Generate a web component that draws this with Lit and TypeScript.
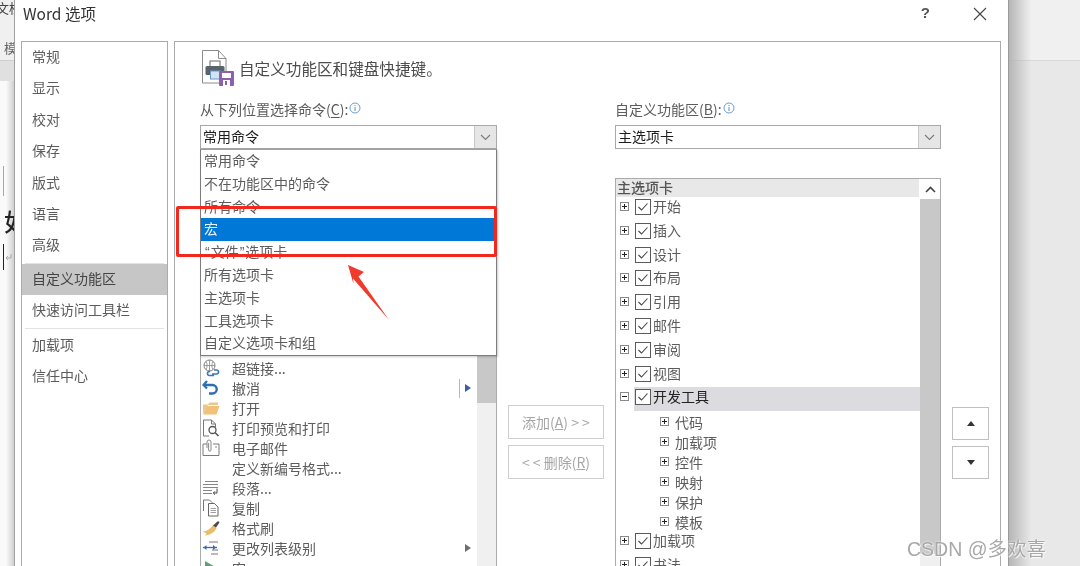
import { LitElement, html, css, svg, nothing } from 'lit';
import { customElement } from 'lit/decorators.js';

const icons: Record<string, unknown> = {
  link: svg`<circle cx="7.5" cy="6.5" r="5.5" fill="none" stroke="#7a7a7a"/><path d="M2 6.5h11M7.5 1v11M4 2.5c1.5 2.500 1.500 5.500 0 8M11 2.500c-1.500 2.500-1.500 5.500 0 8" fill="none" stroke="#8a8a8a" stroke-width=".8"/><path d="M8 12.500h-.5a2 2 0 0 0 0 4H12M12 11h2.500a2 2 0 0 1 0 4H10" fill="none" stroke="#3d78b5" stroke-width="1.600"/>`,
  undo: svg`<path d="M5 2 1.500 6 5 9.500" fill="none" stroke="#2f6fb0" stroke-width="2.200"/><path d="M2 6h8.500a4.200 4.200 0 0 1 0 8.500H7" fill="none" stroke="#2f6fb0" stroke-width="2.400"/>`,
  folder: svg`<path d="M1 15V5.500h5l1.500-2H16V6H6L1 15Z" fill="#e8c88e"/><path d="M1 15.500 5 7h12.500l-3 8.500Z" fill="#f2c078"/>`,
  preview: svg`<path d="M1.500 17V1h8l4 4v3M9.500 1v4h4M1.500 17H7" fill="none" stroke="#777" stroke-width="1"/><circle cx="10.500" cy="11" r="3.500" fill="#fff" stroke="#555" stroke-width="1.300"/><path d="m13 13.500 3.500 3.500" stroke="#555" stroke-width="1.600"/>`,
  mail: svg`<path d="M5 5H1v11.500h16V5h-6" fill="none" stroke="#7a7a7a"/><path d="M5 9V3a2 2 0 0 1 4 0v8a1.200 1.200 0 0 1-2.400 0V4" fill="none" stroke="#8a8a8a"/><path d="M13 8h2" stroke="#888"/>`,
  para: svg`<path d="M3 2.500h13M1 5.500h15M1 8.500h15M1 11.500h9M1 14.500h9" stroke="#777" stroke-width=".9"/><path d="M15 9.500v4.500h-3.500m1.500-1.700-1.700 1.700 1.700 1.700" fill="none" stroke="#333" stroke-width=".9"/>`,
  copy: svg`<path d="M1.500 12V1h6l2.500 2.500v1" fill="#fff" stroke="#777"/><path d="M6.500 4.500h6l3.500 3.500v9H6.500Z" fill="#fff" stroke="#666"/><path d="M8.500 9.500h5.500M8.500 11.500h5.500M8.500 13.500h5.500" stroke="#888" stroke-width=".8"/>`,
  brush: svg`<path d="m11 6 3.500 3c-1.500 4-6 7-12 7.500C6 14.500 4 14 .500 12.500 5 12.500 8.500 9.500 11 6Z" fill="#e8bd6c"/><path d="m11 6.500 5-4.500 1.500 1.500-3.500 5Z" fill="#4a4a4a"/>`,
  level: svg`<path d="M7 3h9M9 15h7M10 11h6" stroke="#777" stroke-width="1"/><path d="M1 8.500h14" stroke="#2f6fb0" stroke-width="1.300"/><path d="m4.500 6-3 2.500 3 2.500ZM11 6l3 2.500-3 2.500Z" fill="#2f6fb0"/>`,
  macro: svg`<path d="M3 2v14l12-7Z" fill="#5f9e78"/>`,
};

const navTop = ['常规', '显示', '校对', '保存', '版式', '语言', '高级'];
const menuItems = ['常用命令', '不在功能区中的命令', '所有命令', '宏', '“文件”选项卡', '所有选项卡', '主选项卡', '工具选项卡', '自定义选项卡和组'];
const commands = [
  { icon: 'link', label: '超链接...' },
  { icon: 'undo', label: '撤消', split: true },
  { icon: 'folder', label: '打开' },
  { icon: 'preview', label: '打印预览和打印' },
  { icon: 'mail', label: '电子邮件' },
  { icon: '', label: '定义新编号格式...' },
  { icon: 'para', label: '段落...' },
  { icon: 'copy', label: '复制' },
  { icon: 'brush', label: '格式刷' },
  { icon: 'level', label: '更改列表级别', more: true },
  { icon: 'macro', label: '宏' },
];
const tabsBefore = ['开始', '插入', '设计', '布局', '引用', '邮件', '审阅', '视图'];
const devChildren = ['代码', '加载项', '控件', '映射', '保护', '模板'];

@customElement('app-root')
export class AppRoot extends LitElement {
  static styles = css`
    :host {
      display: block;
      width: 1080px;
      height: 566px;
      overflow: hidden;
      font-family: "Noto Sans CJK SC", "Liberation Sans", sans-serif;
      font-size: 14px;
      color: #5c5c5c;
    }
    .page {
      position: relative;
      display: flex;
      height: 566px;
      overflow: hidden;
      filter: blur(0.4px);
    }
    .strip-left {
      width: 14px;
      flex: none;
      display: flex;
      flex-direction: column;
      overflow: hidden;
      white-space: nowrap;
      background: linear-gradient(90deg, transparent 6px, #d0d0d0), #fafafa;
    }
    .ribbon {
      height: 60px;
      flex: none;
      background: #f0f0f0;
      font-size: 13px;
      line-height: 18px;
      color: #666;
    }
    .ribbon .doc { margin: -1px 0 0 -4px; color: #444; }
    .ribbon .tab { margin: 22px 0 0 4px; }
    .toolbar { height: 20px; flex: none; background: #e0e0e0; border-top: 1px solid #cecece; }
    .doc-area { flex: 1; }
    .box-edge { height: 30px; width: 3px; margin-top: 85px; border-right: 1px solid #a8a8a8; }
    .big { margin: 8px 0 0 4px; font-size: 24px; line-height: 34px; color: #222; font-weight: 500; }
    .caret { display: flex; align-items: center; height: 26px; margin-top: 6px; margin-left: 3px; }
    .caret i { width: 1px; height: 26px; background: #222; }
    .caret svg { margin-left: 1px; }
    .strip-right {
      flex: 1;
      background: linear-gradient(90deg, #b6b6b6, rgba(200, 200, 200, 0) 22px),
        linear-gradient(#f0f0f0 60px, #d8d8d8 60px, #d8d8d8 61px, #e8e8e8 61px);
    }
    .dialog {
      width: 995px;
      flex: none;
      box-sizing: border-box;
      display: flex;
      flex-direction: column;
      background: #fff;
      border-left: 1px solid #a0a0a0;
      border-right: 1px solid #9a9a9a;
    }
    .titlebar {
      height: 41px;
      flex: none;
      box-sizing: border-box;
      display: flex;
      align-items: flex-start;
      padding: 2px 21px 0 8px;
      font-size: 15px;
      line-height: 22px;
      color: #333;
    }
    .titlebar .name { flex: 1; font-size: 15.500px; }
    .titlebar .help { font-family: "Liberation Sans", sans-serif; font-size: 15px; font-weight: bold; color: #555; margin-right: 43px; }
    .titlebar svg { margin-top: 5px; }
    .body { flex: 1; min-height: 0; display: flex; gap: 6px; padding: 0 7px 0 6px; }
    .nav {
      width: 147px;
      flex: none;
      box-sizing: border-box;
      border: 1px solid #ababab;
      border-bottom: 0;
    }
    .nav-item { height: 31.400px; line-height: 29.400px; padding-left: 10px; }
    .nav-item.on { background: #c6c6c6; color: #444; }
    .nav-sep { height: 1px; margin: 1px 3px 0; background: #e4e4e4; }
    .nav-sep.low { margin-bottom: 1px; }
    .main {
      flex: 1;
      min-width: 0;
      box-sizing: border-box;
      display: flex;
      flex-direction: column;
      border: 1px solid #ababab;
      border-bottom: 0;
    }
    .head {
      height: 58px;
      flex: none;
      box-sizing: border-box;
      padding: 8px 0 0 27px;
      display: flex;
      align-items: flex-start;
      gap: 5px;
    }
    .head svg { display: block; }
    .head span { font-size: 15.600px; line-height: 22px; color: #4c4c4c; margin-top: 7px; }
    .columns { flex: 1; min-height: 0; display: flex; padding-left: 25px; }
    .col { display: flex; flex-direction: column; min-height: 0; }
    .col.cmds { width: 297px; }
    .col.tabs { width: 326px; }
    .col.mid { width: 118px; box-sizing: border-box; padding: 305px 0 0 11px; gap: 6px; }
    .col.order { padding: 307px 0 0 11px; gap: 6px; }
    .label { height: 20px; line-height: 18px; display: flex; align-items: flex-start; gap: 1px; flex: none; }
    .label u { text-underline-offset: 2px; }
    .label svg { margin-top: 2px; }
    .combo {
      height: 24px;
      margin-top: 5px;
      flex: none;
      box-sizing: border-box;
      display: flex;
      border: 1px solid #a8a8a8;
      color: #1c1c1c;
      line-height: 20px;
    }
    .combo .val { flex: 1; padding-left: 2px; }
    .combo .btn {
      width: 21px;
      background: #e6e6e6;
      border-left: 1px solid #c8c8c8;
      display: flex;
      align-items: center;
      justify-content: center;
    }
    .menu {
      flex: none;
      border: 1px solid #7c7c7c;
      border-top-color: #a0a0a0;
      box-shadow: 1px 1px 2px rgba(0, 0, 0, 0.2);
      background: #fff;
      position: relative;
      z-index: 1;
      width: 295px;
    }
    .menu div { height: 22.800px; line-height: 21.800px; padding-left: 3px; }
    .menu div.on { background: #0078d7; color: #e8f2fb; }
    .menu .q { font-family: "Liberation Sans", sans-serif; margin: 0 1px; }
    .list {
      flex: 1;
      min-height: 0;
      display: flex;
      overflow: hidden;
      border-left: 1px solid #ababab;
      border-right: 1px solid #ababab;
    }
    .rows { flex: 1; min-width: 0; padding-top: 2px; overflow: hidden; }
    .cmd { height: 20px; display: flex; align-items: center; padding-left: 1px; position: relative; }
    .cmd .ico { width: 18px; height: 18px; flex: none; margin-right: 12px; }
    .cmd .name { flex: 1; white-space: nowrap; }
    .cmd .split { width: 1px; height: 19px; background: #b8b8b8; margin-right: 5px; }
    .tri { width: 0; height: 0; border-style: solid; border-width: 4px 0 4px 6px; border-color: transparent transparent transparent #6f6f6f; margin-right: 6px; }
    .tri.blue { border-left-color: #3f5f9f; }
    .vbar { width: 19px; flex: none; display: flex; flex-direction: column; background: #f0f0f0; }
    .vbar .thumb { background: #c8c8c8; }
    .list .thumb { height: 47px; }
    .tree {
      flex: 1;
      min-height: 0;
      margin-top: 29px;
      display: flex;
      overflow: hidden;
      border: 1px solid #ababab;
      border-bottom: 0;
    }
    .tree-body { flex: 1; min-width: 0; overflow: hidden; }
    .tree-head {
      height: 18px;
      line-height: 16px;
      padding-left: 1px;
      margin-right: 1px;
      background: #e8e8e8;
      color: #555;
      font-weight: 500;
    }
    .node { height: 23.800px; display: flex; padding-left: 4px; }
    .node .body-cell { flex: 1; height: 23.800px; display: flex; margin-left: 5px; padding-left: 1px; line-height: 19px; }
    .node.on .body-cell { background: #dcdce0; color: #222; }
    .exp {
      width: 9px;
      height: 9px;
      flex: none;
      margin-top: 5px;
      display: block;
    }
    .check { width: 16px; height: 16px; flex: none; margin: 2px 2px 0 0; display: block; }
    .kids { margin: 1.800px 0 -2px; }
    .kid { height: 20px; line-height: 18px; display: flex; padding-left: 44px; gap: 6px; }
    .kid .exp { margin-top: 4px; }
    .bar-btn { height: 20px; flex: none; background: #fff; display: flex; align-items: center; justify-content: center; }
    .tree .thumb { height: 355px; flex: none; }
    .tree .vbar { width: 20px; }
    .action {
      width: 96px;
      height: 34px;
      box-sizing: border-box;
      border: 1px solid #cfcfcf;
      color: #a6a6a6;
      display: flex;
      align-items: center;
      justify-content: center;
      gap: 0;
      white-space: pre;
    }
    .move {
      width: 37px;
      height: 33px;
      box-sizing: border-box;
      border: 1px solid #c0c0c0;
      display: flex;
      align-items: center;
      justify-content: center;
    }
    .up { border-style: solid; border-width: 0 4.500px 5px; border-color: transparent transparent #333; }
    .down { border-style: solid; border-width: 5px 4.500px 0; border-color: #333 transparent transparent; }
    .highlight {
      position: absolute;
      left: 176px;
      top: 206px;
      width: 321px;
      height: 51px;
      box-sizing: border-box;
      border: 3px solid #f2281c;
      border-radius: 2px;
      z-index: 2;
    }
    .arrow { position: absolute; left: 340px; top: 260px; z-index: 2; }
    .mark {
      position: absolute;
      left: 907px;
      top: 535px;
      z-index: 3;
      font-family: "Liberation Sans", "Noto Sans CJK SC", sans-serif;
      font-size: 19.500px;
      line-height: 28px;
      white-space: nowrap;
      color: #a8a8a8;
      text-shadow: 0 0 2px #fff, 1px 1px 1px rgba(255, 255, 255, 0.8);
    }
  `;

  private chevron(up = false) {
    return html`<svg width="11" height="7" viewBox="0 0 11 7"><path d=${up ? 'M1 6 5.500 1.500 10 6' : 'M1 1l4.500 4.500L10 1'} fill="none" stroke=${up ? '#444' : '#7a7a7a'} stroke-width=${up ? 1.6 : 1.1}/></svg>`;
  }

  private info() {
    return html`<svg width="12" height="12" viewBox="0 0 12 12"><circle cx="6" cy="6" r="5" fill="none" stroke="#6d9bd1"/><path d="M6 5v4M6 3v1" stroke="#5b8cc6"/></svg>`;
  }

  private expander(open = false) {
    return html`<svg class="exp" viewBox="0 0 9 9"><rect x=".5" y=".5" width="8" height="8" fill="#fff" stroke="#8a8a8a"/><path d=${open ? 'M2 4.500h5' : 'M2 4.500h5M4.500 2v5'} stroke="#222"/></svg>`;
  }

  private checkbox() {
    return html`<svg class="check" viewBox="0 0 16 16"><rect x=".5" y=".5" width="15" height="15" fill="#fff" stroke="#5a5a5a"/><path d="m3.500 8 3 3 6-6.500" fill="none" stroke="#444" stroke-width="1.100"/></svg>`;
  }

  private node(label: string, open = false, on = false) {
    return html`<div class="node ${on ? 'on' : ''}">
      ${this.expander(open)}
      <div class="body-cell">${this.checkbox()}<span>${label}</span></div>
    </div>`;
  }

  // the curly quotes are narrow in the reference, the CJK font makes them full width
  private menuLabel(text: string) {
    return text.split(/([“”])/).map((part) => (part === '“' || part === '”' ? html`<span class="q">${part}</span>` : part));
  }

  private renderStrips() {
    return html`<div class="strip-left">
      <div class="ribbon"><div class="doc">文档</div><div class="tab">模</div></div>
      <div class="toolbar"></div>
      <div class="doc-area">
        <div class="box-edge"></div>
        <div class="big">如</div>
        <div class="caret"><i></i><svg width="7" height="7" viewBox="0 0 7 7"><path d="M6 0v4H1m2-2L1 4l2 2" fill="none" stroke="#999" stroke-width=".8"/></svg></div>
      </div>
    </div>`;
  }

  private renderCommands() {
    return html`<div class="list">
      <div class="rows">
        ${commands.map(
          (c) => html`<div class="cmd">
            <svg class="ico" viewBox="0 0 18 18">${c.icon ? icons[c.icon] : nothing}</svg>
            <span class="name">${c.label}</span>
            ${c.split ? html`<span class="split"></span><span class="tri blue"></span>` : nothing}
            ${c.more ? html`<span class="tri"></span>` : nothing}
          </div>`,
        )}
      </div>
      <div class="vbar"><div class="thumb"></div></div>
    </div>`;
  }

  private renderTree() {
    return html`<div class="tree">
      <div class="tree-body">
        <div class="tree-head">主选项卡</div>
        ${tabsBefore.map((t) => this.node(t))}
        ${this.node('开发工具', true, true)}
        <div class="kids">
          ${devChildren.map((k) => html`<div class="kid">${this.expander()}<span>${k}</span></div>`)}
        </div>
        ${this.node('加载项')}
        ${this.node('书法')}
      </div>
      <div class="vbar">
        <div class="bar-btn">${this.chevron(true)}</div>
        <div class="thumb"></div>
      </div>
    </div>`;
  }

  render() {
    return html`<div class="page">
      ${this.renderStrips()}
      <div class="dialog">
        <div class="titlebar">
          <span class="name">Word 选项</span>
          <span class="help">?</span>
          <svg width="14" height="14" viewBox="0 0 14 14"><path d="m1 1 12 12M13 1 1 13" stroke="#444" stroke-width="1.100"/></svg>
        </div>
        <div class="body">
          <div class="nav">
            ${navTop.map((n) => html`<div class="nav-item">${n}</div>`)}
            <div class="nav-sep"></div>
            <div class="nav-item on">自定义功能区</div>
            <div class="nav-item">快速访问工具栏</div>
            <div class="nav-sep low"></div>
            <div class="nav-item">加载项</div>
            <div class="nav-item">信任中心</div>
          </div>
          <div class="main">
            <div class="head">
              <svg width="32" height="36" viewBox="0 0 32 36">
                <path d="M.5.5h16l7.500 8V33H.5Z" fill="#fff" stroke="#8c8c8c"/>
                <path d="M16.500.5v8H24" fill="none" stroke="#8c8c8c"/>
                <rect x="8" y="11" width="10" height="7" fill="#fff" stroke="#6a6a6a"/>
                <rect x="3.500" y="16" width="19" height="9" rx="1.500" fill="#59636d"/>
                <rect x="8.500" y="21" width="10" height="8" fill="#d3e3f1" stroke="#6b98c4"/>
                <rect x="17" y="21" width="15" height="15" rx="1" fill="#8e5fae"/>
                <rect x="20" y="23" width="9" height="5" fill="#fff"/>
                <rect x="21" y="30" width="7" height="6" fill="#fff"/>
                <rect x="23" y="31" width="2" height="4" fill="#8e5fae"/>
              </svg>
              <span>自定义功能区和键盘快捷键。</span>
            </div>
            <div class="columns">
              <div class="col cmds">
                <div class="label"><span>从下列位置选择命令(<u>C</u>):</span>${this.info()}</div>
                <div class="combo"><span class="val">常用命令</span><span class="btn">${this.chevron()}</span></div>
                <div class="menu">
                  ${menuItems.map((m) => html`<div class=${m === '宏' ? 'on' : ''}>${this.menuLabel(m)}</div>`)}
                </div>
                ${this.renderCommands()}
              </div>
              <div class="col mid">
                <div class="action">添加(<u>A</u>) &gt; &gt;</div>
                <div class="action">&lt; &lt; 删除(<u>R</u>)</div>
              </div>
              <div class="col tabs">
                <div class="label"><span>自定义功能区(<u>B</u>):</span>${this.info()}</div>
                <div class="combo"><span class="val">主选项卡</span><span class="btn">${this.chevron()}</span></div>
                ${this.renderTree()}
              </div>
              <div class="col order">
                <div class="move"><span class="up"></span></div>
                <div class="move"><span class="down"></span></div>
              </div>
            </div>
          </div>
        </div>
      </div>
      <div class="strip-right"></div>
      <div class="highlight"></div>
      <svg class="arrow" width="52" height="64" viewBox="0 0 52 64">
        <path d="M8 5 24 12 18.500 16.500 49 60 13 18.500 13.500 24Z" fill="#ef3a2c"/>
      </svg>
      <div class="mark">CSDN @多欢喜</div>
    </div>`;
  }
}
